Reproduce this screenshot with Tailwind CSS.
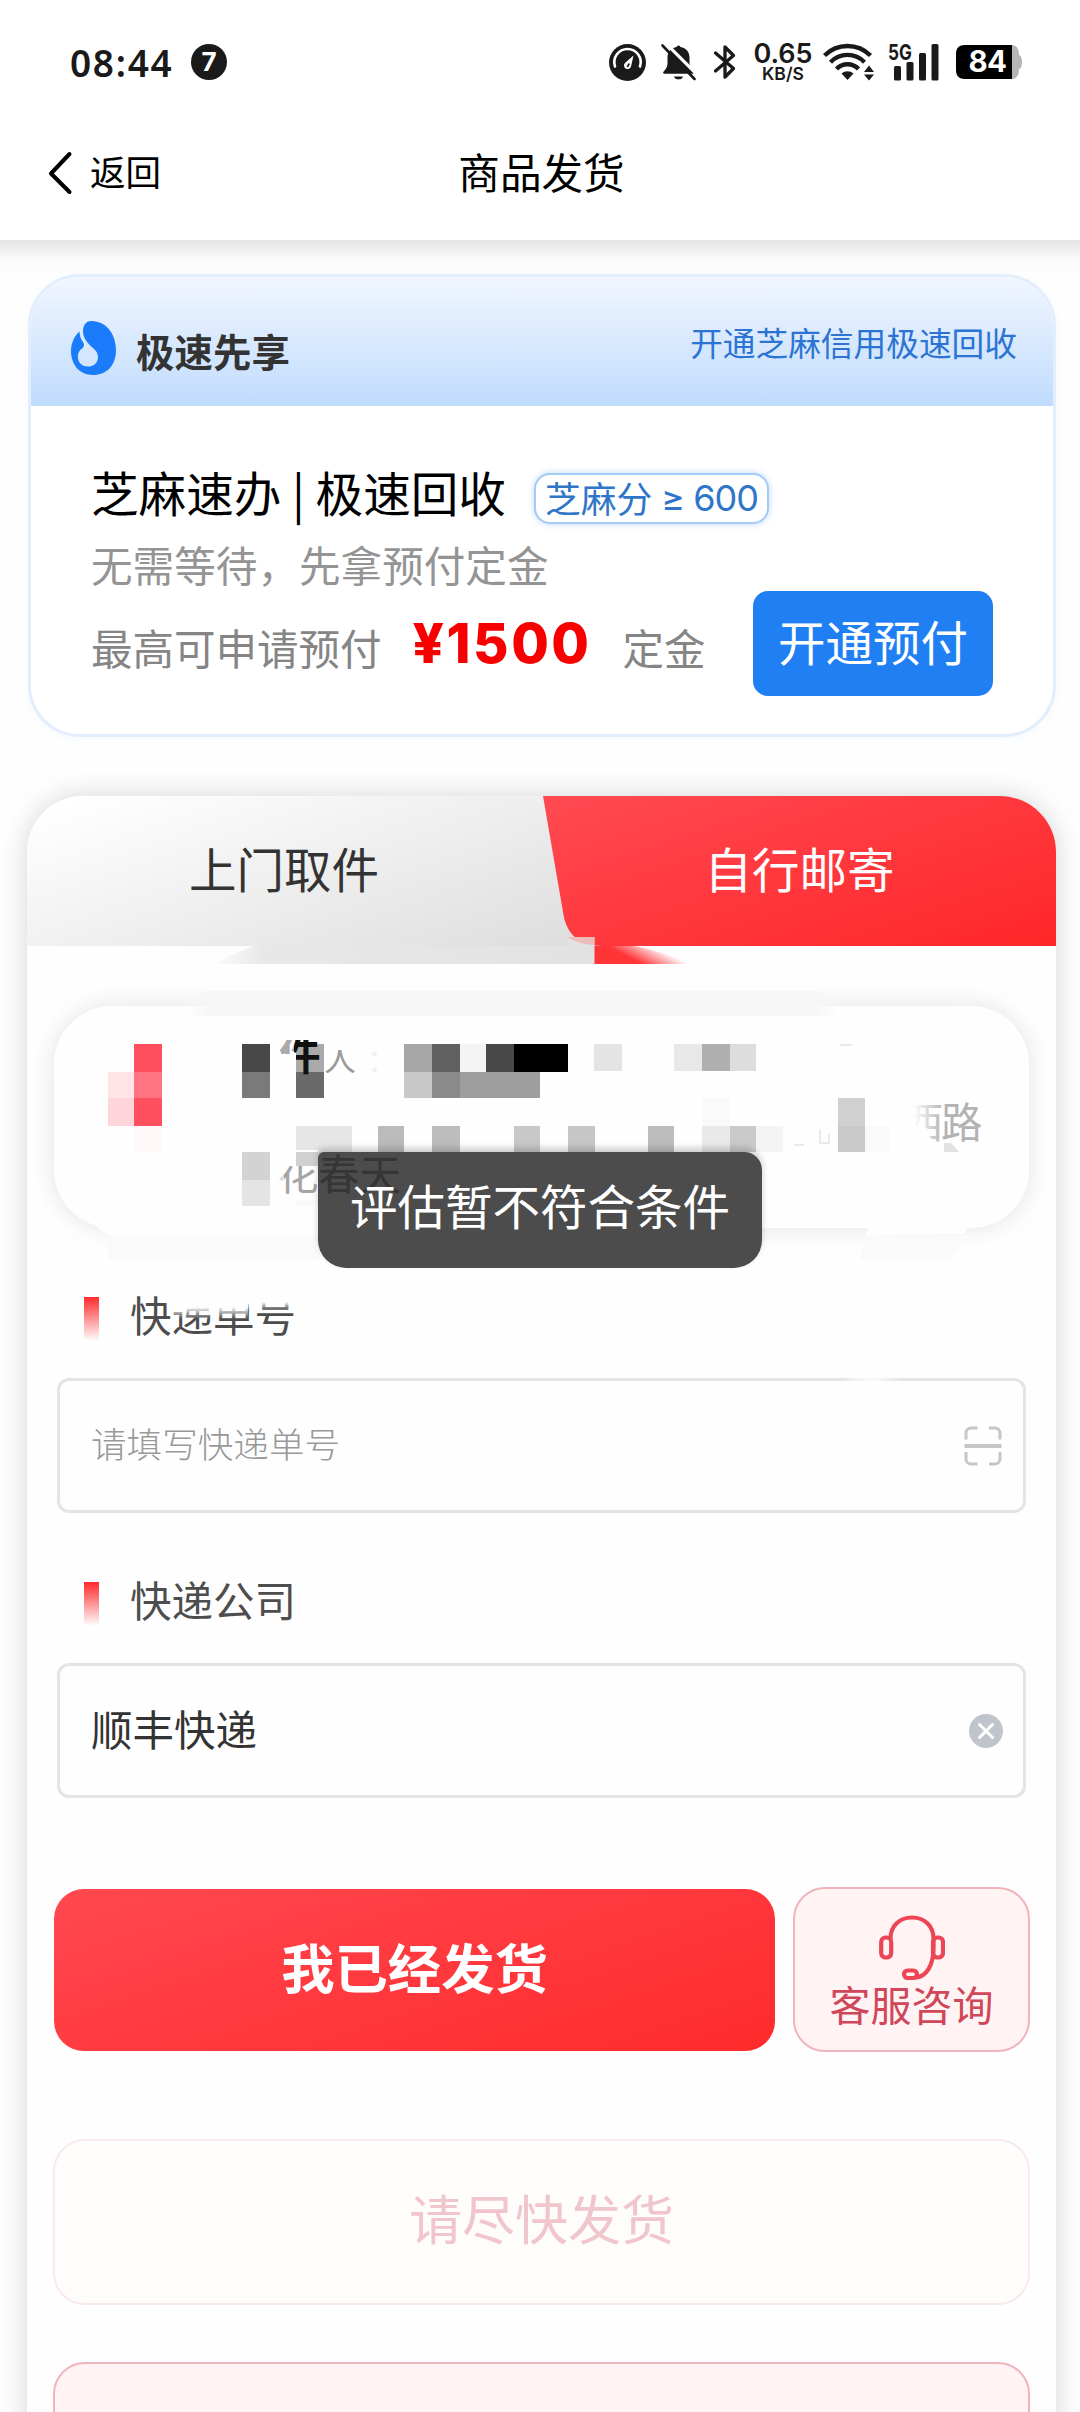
<!DOCTYPE html>
<html lang="zh-CN">
<head>
<meta charset="utf-8">
<meta name="viewport" content="width=1080">
<title>商品发货</title>
<script src="https://cdn.jsdelivr.net/npm/@tailwindcss/browser@4"></script>
</head>
<body class="bg-white">
<div class="relative flex h-[2412px] w-[1080px] flex-col overflow-hidden bg-[#fefefe] font-['Noto_Sans_CJK_SC',sans-serif] text-black">

  <!-- top bar -->
  <header class="relative flex h-[240px] shrink-0 flex-col bg-white">
    <div class="flex h-[124px] items-center pl-[70px] pr-[58px] text-[#1a1a1a]">
      <span class="w-[105px] whitespace-nowrap font-['Noto_Sans',sans-serif] text-[37px] leading-none font-semibold tracking-[1.7px]">08:44</span>
      <span class="ml-4 flex size-9 items-center justify-center rounded-full bg-[#1a1a1a] font-['Inter',sans-serif] text-[26px] leading-none font-bold text-white">7</span>
      <svg class="ml-auto" width="37" height="37" viewBox="0 0 37 37"><circle cx="18.5" cy="18.5" r="18.5" fill="#1a1a1a"/><path d="M6 22.5a13.2 13.2 0 1 1 25 0" fill="none" stroke="#fff" stroke-width="2.6" stroke-linecap="round"/><path d="M24.5 11.5l-2.3 10.2a3.6 3.6 0 1 1-6-2.9z" fill="#fff"/><path d="M20.3 19.5l-2 3.5" stroke="#1a1a1a" stroke-width="1.6"/></svg>
      <svg class="ml-[15px]" width="35" height="37" viewBox="0 0 35 37"><path d="M17.5 1.5a2 2 0 0 1 2 1.6c5.500.9 9 4.900 9 10.400v6c0 3 1.500 5.500 4 8.300.8 1 .3 2-1 2H3.500c-1.300 0-1.800-1-1-2 2.500-2.800 4-5.300 4-8.300v-6c0-5.500 3.500-9.500 9-10.400a2 2 0 0 1 2-1.600z" fill="#1a1a1a"/><path d="M13 32.500h9a4.600 3.600 0 0 1-9 0z" fill="#1a1a1a"/><path d="M4 -1.500L37 31.500" stroke="#fff" stroke-width="3.200"/><path d="M1.500 1.500L33.500 35" stroke="#1a1a1a" stroke-width="2.600" stroke-linecap="round"/></svg>
      <svg class="ml-[17px]" width="24" height="38" viewBox="0 0 24 38"><path d="M2.500 10L20.500 25.500 12 34V4l8.500 8.500L2.500 28" fill="none" stroke="#1a1a1a" stroke-width="3.300" stroke-linecap="round" stroke-linejoin="round"/></svg>
      <span class="ml-4 flex w-[60px] flex-col items-center font-['Inter',sans-serif] leading-none font-semibold">
        <span class="text-[27px] leading-[22px]">0.65</span><span class="text-[17.500px] leading-[17px]">KB/S</span>
      </span>
      <svg class="ml-[10px]" width="52" height="38" viewBox="0 0 52 38"><g fill="none" stroke="#1a1a1a" stroke-width="4.400"><path d="M1.500 12.500a32.500 32.500 0 0 1 46 0"/><path d="M7.500 19.200a23.500 23.500 0 0 1 34 0"/><path d="M13.500 26a15 15 0 0 1 22 0"/></g><path d="M18.500 30.500a9 9 0 0 1 12 0L24.500 37z" fill="#1a1a1a"/><path d="M41 29l5-6.500 5 6.500zM41 31.500h10l-5 6z" fill="#1a1a1a"/></svg>
      <span class="relative ml-[13px] block h-[38px] w-[53px]">
        <svg class="absolute inset-0" width="53" height="38" viewBox="0 0 53 38"><g fill="#1a1a1a"><rect x="6" y="23" width="7" height="14.500" rx="1.500"/><rect x="18.500" y="19" width="7" height="18.500" rx="1.500"/><rect x="31" y="10" width="7" height="27.500" rx="1.500"/><rect x="43.500" y="1" width="7" height="36.500" rx="1.500"/></g></svg>
        <span class="absolute top-[-2px] left-0 origin-left scale-x-[0.78] font-['Inter',sans-serif] text-[22px] leading-[22px] font-bold">5G</span>
      </span>
      <span class="relative ml-[15px] flex h-[34px] w-[66px] items-center">
        <svg class="absolute inset-0" width="66" height="34" viewBox="0 0 66 34"><path d="M10 0h45c6 0 8 4 8 10 4 1 4 13 0 14 0 6-2 10-8 10H10z" fill="#b5b5b5"/><path d="M9 0h47v34H9c-6 0-9-3-9-9V9c0-6 3-9 9-9z" fill="#000"/></svg>
        <span class="relative w-[66px] pr-[3px] text-center font-['Inter',sans-serif] text-[29.500px] leading-none font-bold tracking-[-0.500px] text-white">84</span>
      </span>
    </div>
    <div class="relative flex h-[98px] items-center">
      <svg class="ml-[47px]" width="27" height="46" viewBox="0 0 27 46"><path d="M22.500 4L4 23.500 22.500 42" fill="none" stroke="#000" stroke-width="4" stroke-linecap="round" stroke-linejoin="round"/></svg>
      <span class="ml-4 text-[35.500px] leading-[46px] -mt-1">返回</span>
      <h1 class="absolute inset-x-0 top-[21px] pl-[3px] text-center text-[41.600px] leading-[52px] font-normal">商品发货</h1>
    </div>
  </header>
  <div class="h-[34px] shrink-0 bg-linear-to-b from-[#e4e4e4] via-[#fbfbfb] via-60% to-[#fefefe]"></div>

  <!-- prepayment card -->
  <section class="ml-[28px] flex h-[463px] w-[1028px] shrink-0 flex-col overflow-hidden rounded-[52px] border-[3px] border-[#e3eefc] bg-white shadow-[0_2px_8px_rgba(80,150,240,0.060)]">
    <div class="flex h-[129px] shrink-0 items-center justify-between bg-linear-to-b from-[#f1f6fe] to-[#c0dcfd] pr-[36px] pl-[40px]">
      <div class="flex items-center">
        <svg class="mt-[13px]" width="45" height="54" viewBox="0 0 45 54"><path d="M20.500 0C36 0 45 14 45 29c0 15-9 25-23 25S0 43 0 30C0 22 4 14 8.500 10.500c.2 4 1 7 3.500 10.500 1.500 2.300 1.500 5-1.500 7C4.500 32 5.500 45.500 17 45.500c10.500 0 12.500-11 7-16.500C19 24 12 19 12 10.500 12 3 16 0 20.500 0z" fill="#1a7cfa"/></svg>
        <span class="ml-5 mt-[16px] text-[38.500px] leading-[50px] font-bold text-[#333]">极速先享</span>
      </div>
      <span class="text-[32.700px] leading-[44px] text-[#2b74d3]">开通芝麻信用极速回收</span>
    </div>
    <div class="flex flex-col pt-[54px] pr-[60px] pl-[60px]">
      <div class="flex h-[64px] items-center">
        <span class="w-[443px] text-[47.600px] leading-[64px] whitespace-nowrap">芝麻速办 | 极速回收</span>
        <span class="mt-[13px] flex h-[51px] w-[235px] items-center justify-center rounded-[16px] border-2 border-[#a4cbf5] bg-white pb-[4px] text-[35.800px] leading-[46px] whitespace-nowrap text-[#2f76c9] shadow-[0_0_6px_rgba(60,140,240,0.350)]">芝麻分<span class="mt-[3px] ml-[9px] font-['Inter',sans-serif] text-[36px] tracking-[-1px]">≥ 600</span></span>
      </div>
      <p class="mt-[10px] h-[57px] pt-[1px] text-[41.600px] leading-[58px] text-[#949494]">无需等待，先拿预付定金</p>
      <div class="flex h-[105px] items-center">
        <span class="pt-[7px] text-[41.500px] leading-[58px] text-[#858585]">最高可申请预付</span>
        <span class="ml-[31px] w-[180px] font-['Inter',sans-serif] text-[54.500px] leading-none font-extrabold tracking-[2.500px] whitespace-nowrap text-[#f80000]">¥1500</span>
        <span class="ml-[30px] pt-[7px] text-[41.500px] leading-[58px] text-[#858585]">定金</span>
        <button class="ml-auto h-[105px] w-[240px] rounded-[15px] bg-[#207ff3] pb-[5px] text-[47.500px] leading-[60px] text-white">开通预付</button>
      </div>
    </div>
  </section>

  <!-- shipping card -->
  <section class="relative ml-[27px] mt-[59px] flex h-[1700px] w-[1029px] shrink-0 flex-col rounded-t-[56px] bg-[#fefefe] shadow-[0_0_28px_rgba(0,0,0,0.160)]">
    <div class="relative h-[150px] shrink-0">
      <svg class="absolute inset-0" width="1029" height="168" viewBox="0 0 1029 168">
        <defs>
          <linearGradient id="tabGrey" gradientUnits="userSpaceOnUse" x1="215" y1="-70" x2="317" y2="225"><stop offset="0.050" stop-color="#fff"/><stop offset="1" stop-color="#dedede"/></linearGradient>
          <linearGradient id="tabRed" gradientUnits="userSpaceOnUse" x1="725" y1="-69" x2="819" y2="219"><stop offset="0" stop-color="#ff4a52"/><stop offset="1" stop-color="#ff2629"/></linearGradient>
          <linearGradient id="smearRed" gradientUnits="userSpaceOnUse" x1="610" y1="170" x2="622" y2="147"><stop offset="0.150" stop-color="#ff3437"/><stop offset="1" stop-color="#ff3437" stop-opacity="0"/></linearGradient>
          <linearGradient id="smearGrey" x1="0" x2="1"><stop offset="0" stop-color="#e5e5e5" stop-opacity="0"/><stop offset="0.140" stop-color="#e8e8e8"/><stop offset="1" stop-color="#e2e2e2"/></linearGradient>
        </defs>
        <path d="M0 150V56A56 56 0 0 1 56 0h520v150z" fill="url(#tabGrey)"/>
        <path d="M516 0H973a56 56 0 0 1 56 56v94H576c-24 0-37-12-40-34z" fill="url(#tabRed)"/>
        <path d="M184 168L226 150H568V168z" fill="url(#smearGrey)"/>
        <path d="M540 141h27.500v27H540z" fill="#e2e2e2"/><path d="M540 141h27.500v8q-16-1-27.500-8z" fill="#f3a9aa" opacity="0.700"/>
        <path d="M567.500 150h40q30 6 56 18h-96z" fill="url(#smearRed)"/>
      </svg>
      <div class="relative grid h-full grid-cols-2 items-center text-[47.500px] leading-[60px]">
        <span class="pl-[162px] pb-[6px] text-[#333]">上门取件</span>
        <span class="pl-[163px] pb-[6px] text-white">自行邮寄</span>
      </div>
    </div>

    <div class="mt-[60px] ml-[27px] h-[222px] w-[975px] shrink-0 rounded-[58px] bg-[#fefefe] shadow-[0_0_24px_rgba(0,0,0,0.110)]"></div>

    <div class="mt-[58px] flex h-[66px] shrink-0 items-center pl-[57px]">
      <span class="h-[44px] w-[15px] bg-linear-to-b from-[#ff2a2c] to-[#ff2a2c]/0"></span>
      <span class="ml-[31px] -mt-[10px] text-[41.500px] leading-[54px] text-[#4d4d4d]">快递单号</span>
    </div>
    <div class="mt-[26px] ml-[30px] flex h-[135px] w-[969px] shrink-0 items-center justify-between rounded-[12px] border-[3px] border-[#e4e4e4] pr-[21px] pl-[31px]">
      <span class="-mt-[5px] text-[35.600px] leading-[46px] font-light text-[#999]">请填写快递单号</span>
      <svg width="38" height="40" viewBox="0 0 38 40" fill="none" stroke="#c6c6c6" stroke-width="3"><path d="M13.500 2H7a5 5 0 0 0-5 5v6.500M25 2h6a5 5 0 0 1 5 5v6.500M2 26v7a5 5 0 0 0 5 5h6.500M36 26v7a5 5 0 0 1-5 5h-6"/><path d="M.5 20h37" stroke-width="3.800"/></svg>
    </div>
    <div class="mt-[58px] flex h-[66px] shrink-0 items-center pl-[57px]">
      <span class="h-[44px] w-[15px] bg-linear-to-b from-[#ff2a2c] to-[#ff2a2c]/0"></span>
      <span class="ml-[31px] -mt-[10px] text-[41.500px] leading-[54px] text-[#4d4d4d]">快递公司</span>
    </div>
    <div class="mt-[26px] ml-[30px] flex h-[135px] w-[969px] shrink-0 items-center justify-between rounded-[12px] border-[3px] border-[#e4e4e4] pr-[20px] pl-[31px]">
      <span class="-mt-[5px] text-[41.500px] leading-[54px] text-[#333]">顺丰快递</span>
      <svg width="34" height="34" viewBox="0 0 34 34"><circle cx="17" cy="17" r="17" fill="#c0c4cc"/><path d="M10.500 10.500l13 13M23.500 10.500l-13 13" stroke="#fff" stroke-width="3" stroke-linecap="round"/></svg>
    </div>

    <div class="mt-[89px] ml-[27px] flex w-[976px] shrink-0 items-center justify-between">
      <button class="h-[162px] w-[721px] rounded-[30px] bg-linear-[162deg] from-[#ff4850] to-[#ff2a2c] pb-[7px] text-[53.300px] leading-[70px] font-bold text-white">我已经发货</button>
      <button class="flex h-[165px] w-[237px] flex-col items-center rounded-[32px] border-2 border-[#f0b4bb] bg-[#fff4f3] pt-[26px]">
        <svg width="66" height="66" viewBox="0 0 66 66" fill="none" stroke="#ec4656" stroke-width="4.200" stroke-linecap="round"><path d="M11.500 23.500C11.500 11.500 20 2.500 33 2.500s21.500 9 21.500 21v10c0 16-7 28.500-18 29"/><rect x="2.200" y="22.500" width="10" height="20" rx="4.500"/><rect x="54" y="22.500" width="10" height="20" rx="4.500"/><rect x="25" y="55.500" width="13" height="7.500" rx="3.700"/></svg>
        <span class="-mt-[5px] text-[41px] leading-[54px] text-[#d1475a]">客服咨询</span>
      </button>
    </div>

    <div class="mt-[87px] ml-[26px] flex h-[166px] w-[977px] shrink-0 items-center justify-center rounded-[32px] border-2 border-[#f8eaec] bg-[#fefdfc] pb-[11px] text-[53px] leading-[70px] text-[#f1c5cc]">请尽快发货</div>
    <div class="mt-[57px] ml-[26px] h-[166px] w-[977px] shrink-0 rounded-[32px] border-2 border-[#eeb5bc] bg-[#fff4f3]"></div>
  </section>

  <!-- pixelated recipient details -->
  <svg class="absolute top-[980px] left-0" width="1080" height="420" viewBox="0 980 1080 420" font-family="'Noto Sans CJK SC',sans-serif">
    <defs>
      <linearGradient id="band" x1="0" x2="1"><stop offset="0" stop-color="#f7f7f7" stop-opacity="0"/><stop offset="0.040" stop-color="#f7f7f7"/><stop offset="0.960" stop-color="#f7f7f7"/><stop offset="1" stop-color="#f7f7f7" stop-opacity="0"/></linearGradient>
      <linearGradient id="fadeDown" x1="0" y1="0" x2="0" y2="1"><stop offset="0.550" stop-color="#fefefe"/><stop offset="1" stop-color="#fefefe" stop-opacity="0"/></linearGradient>
      <linearGradient id="fadeRight" x1="0" x2="1"><stop offset="0.300" stop-color="#fefefe"/><stop offset="1" stop-color="#fefefe" stop-opacity="0"/></linearGradient>
      <linearGradient id="gap" x1="0" x2="1"><stop offset="0" stop-color="#fefefe" stop-opacity="0"/><stop offset="0.500" stop-color="#fefefe" stop-opacity="0.850"/><stop offset="1" stop-color="#fefefe" stop-opacity="0"/></linearGradient>
    </defs>
    <rect x="185" y="991" width="655" height="25" fill="url(#band)"/>
    <path d="M95 1226h230v9H108z" fill="#fefefe"/><path d="M108 1235h212v25H108z" fill="#fafafa"/>
    <path d="M870 1226h90q10 0 5 8l-100 1z" fill="#fefefe"/><path d="M865 1235h105l-20 25h-90z" fill="#fafafa"/>
    <g shape-rendering="crispEdges">
      <path d="M134 1044h28v28h-28z" fill="#ff4f5e"/><path d="M108 1072h26v26h-26z" fill="#ffe3e5"/><path d="M134 1072h28v26h-28z" fill="#ff7480"/><path d="M108 1098h26v28h-26z" fill="#ffd5dc"/><path d="M134 1098h28v28h-28z" fill="#ff5060"/><path d="M134 1126h28v26h-28z" fill="#fff8f8"/>
      <path d="M242 1044h28v28h-28z" fill="#484848"/><path d="M242 1072h28v26h-28z" fill="#7a7a7a"/><path d="M296 1072h28v26h-28z" fill="#6a6a6a"/>
      <path d="M404 1044h28v28h-28z" fill="#a6a6a6"/><path d="M404 1072h28v26h-28z" fill="#c8c8c8"/><path d="M432 1044h28v28h-28z" fill="#606060"/><path d="M432 1072h28v26h-28z" fill="#8a8a8a"/><path d="M460 1044h26v28h-26z" fill="#f4f4f4"/><path d="M460 1072h80v26h-80z" fill="#9e9e9e"/><path d="M486 1044h28v28h-28z" fill="#484848"/><path d="M514 1044h54v28h-54z" fill="#000"/>
      <path d="M594 1044h28v27h-28z" fill="#e4e4e4"/><path d="M674 1044h28v27h-28z" fill="#e8e8e8"/><path d="M702 1044h28v27h-28z" fill="#afafaf"/><path d="M730 1044h26v27h-26z" fill="#ddd"/>
      <path d="M702 1098h28v28h-28z" fill="#fafafa"/><path d="M838 1098h27v28h-27z" fill="#d0d0d0"/><path d="M838 1126h27v26h-27z" fill="#c9c9c9"/>
      <path d="M296 1126h56v26h-56z" fill="#e6e6e6"/><path d="M378 1126h26v26h-26z" fill="#bbb"/><path d="M432 1126h28v26h-28z" fill="#bdbdbd"/><path d="M514 1126h26v26h-26z" fill="#c8c8c8"/><path d="M568 1126h27v26h-27z" fill="#c6c6c6"/><path d="M648 1126h26v26h-26z" fill="#bdbdbd"/><path d="M702 1126h28v26h-28z" fill="#e9e9e9"/><path d="M730 1126h26v26h-26z" fill="#cacaca"/><path d="M756 1126h27v26h-27z" fill="#f4f4f4"/><path d="M865 1126h25v26h-25z" fill="#fafafa"/>
      <path d="M242 1152h28v28h-28z" fill="#d3d3d3"/><path d="M242 1180h28v26h-28z" fill="#e4e4e4"/><path d="M296 1200h22v6h-22z" fill="#fafafa"/>
    </g>
    <path d="M296 1044h28v28h-28z" fill="#aaa"/>
    <text x="279" y="1070" font-size="41.500" font-weight="700" fill="#111">件</text>
    <path d="M276 1032h18v26q-6 12-18 16z" fill="#fefefe" opacity="0.650"/><path d="M276 1054h20v24h-20z" fill="#fefefe"/><path d="M276 1032h48v8h-48z" fill="#fefefe"/>
    <text x="324" y="1071" font-size="32" fill="#9a9a9a">人</text><path d="M325 1036h34v14h-34z" fill="#fefefe"/>
    <text x="367" y="1071" font-size="30" fill="#f0f0f0">：</text>
    <text x="902" y="1138" font-size="41.500" fill="#b2b2b2">西</text><text x="941" y="1138" font-size="41.500" fill="#b2b2b2">路</text>
    <rect x="900" y="1100" width="44" height="46" fill="url(#fadeRight)"/><path d="M900 1119q22 4 36 26l-36 3z" fill="#fefefe"/>
    <path d="M944 1143h7l8 9h-15z" fill="#e2e2e2"/>
    <path d="M820 1129v14h10M794 1145h10M840 1045h12M829 1134v8" fill="none" stroke="#e4e4e4" stroke-width="1.500"/>
    <text x="277" y="1190" font-size="41.500" fill="#a5a5a5">花</text>
    <path d="M272 1150h46v16h-46z" fill="#fefefe"/><path d="M296 1152h28v14h-28z" fill="#d0d0d0"/><path d="M272 1166h12v28h-12z" fill="#fefefe" opacity="0.600"/>
    <rect x="172" y="1292" width="76" height="27" fill="url(#fadeDown)"/>
    <rect x="246" y="1292" width="54" height="18" fill="url(#fadeDown)"/>
    <rect x="838" y="1376" width="66" height="6" fill="url(#gap)"/>
  </svg>

  <!-- toast -->
  <div class="absolute top-[1152px] left-[318px] flex h-[116px] w-[444px] items-center justify-center rounded-[28px] rounded-tl-[6px] rounded-tr-[18px] bg-[#4c4c4c] pb-[10px] text-[47.500px] leading-[60px] whitespace-nowrap text-white shadow-[0_-4px_6px_rgba(60,60,60,0.250)]">
    <span class="absolute top-[-10px] left-0 text-[41.500px] text-[#353535]">春天</span>
    <span class="relative">评估暂不符合条件</span>
  </div>
</div>
</body>
</html>
